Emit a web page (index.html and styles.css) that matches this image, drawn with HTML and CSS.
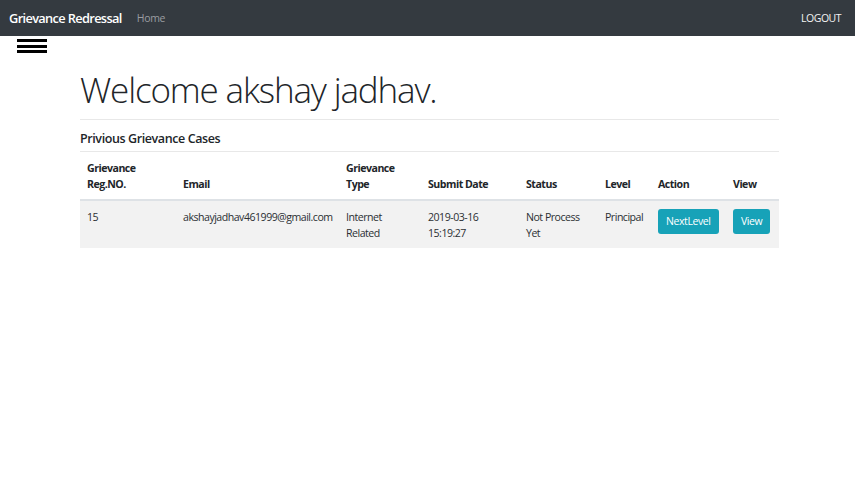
FILE: index.html
```html
<!DOCTYPE html>
<html>
<head>
<meta charset="utf-8">
<link rel="stylesheet" href="styles.css">
</head>
<body>
<nav class="navbar">
  <div class="nav-left">
    <span class="brand">Grievance Redressal</span>
    <span class="nav-link">Home</span>
  </div>
  <span class="logout">LOGOUT</span>
</nav>
<div class="hamburger"><span></span><span></span><span></span></div>
<main class="container">
  <h1 class="welcome">Welcome akshay jadhav.</h1>
  <hr class="rule">
  <h5 class="section-title">Privious Grievance Cases</h5>
  <hr class="rule rule-tight">
  <table class="cases">
    <colgroup>
      <col class="c1"><col class="c2"><col class="c3"><col class="c4"><col class="c5"><col class="c6"><col class="c7"><col class="c8">
    </colgroup>
    <thead>
      <tr>
        <th>Grievance<br>Reg.NO.</th>
        <th>Email</th>
        <th>Grievance<br>Type</th>
        <th>Submit Date</th>
        <th>Status</th>
        <th>Level</th>
        <th>Action</th>
        <th>View</th>
      </tr>
    </thead>
    <tbody>
      <tr>
        <td>15</td>
        <td>akshayjadhav461999@gmail.com</td>
        <td>Internet<br>Related</td>
        <td>2019-03-16<br>15:19:27</td>
        <td>Not Process<br>Yet</td>
        <td>Principal</td>
        <td><button class="btn">NextLevel</button></td>
        <td><button class="btn">View</button></td>
      </tr>
    </tbody>
  </table>
</main>
</body>
</html>
```
FILE: styles.css
```css
* { box-sizing: border-box; }
body {
  margin: 0;
  font-family: "Open Sans", "Noto Sans", sans-serif;
  color: #212529;
  background: #fff;
}
.navbar {
  height: 36px;
  background: #343a40;
  display: flex;
  align-items: center;
  justify-content: space-between;
  padding: 0 14px 0 9px;
}
.nav-left { display: flex; align-items: center; }
.brand {
  color: #fff;
  font-size: 12.8px;
  font-weight: 600;
  letter-spacing: -0.65px;
  margin-right: 15px;
}
.nav-link {
  color: #9a9da0;
  font-size: 10.5px;
  letter-spacing: -0.3px;
}
.logout {
  color: #f3f3f3;
  font-size: 10.5px;
  letter-spacing: -0.5px;
}
.hamburger {
  margin: 3px 0 0 17px;
  width: 30px;
  display: flex;
  flex-direction: column;
  gap: 2.5px;
}
.hamburger span {
  display: block;
  height: 3px;
  background: #000;
}
.container {
  width: 699px;
  margin-left: 80px;
}
.welcome {
  font-size: 35px;
  font-weight: 300;
  margin: 16px 0 0;
  line-height: 42px;
  letter-spacing: -1.15px;
}
.rule {
  border: 0;
  border-top: 1px solid #e8e8e8;
  margin: 8px 0 0;
}
.section-title {
  font-size: 12.5px;
  font-weight: 600;
  letter-spacing: -0.4px;
  margin: 10px 0 0;
  line-height: 18px;
}
.rule-tight { margin-top: 3px; }
.cases {
  width: 699px;
  border-collapse: collapse;
  table-layout: fixed;
  font-size: 10.6px;
  line-height: 16px;
  letter-spacing: -0.5px;
}
.c1 { width: 96px; }
.c2 { width: 163px; }
.c3 { width: 82px; }
.c4 { width: 98px; }
.c5 { width: 79px; }
.c6 { width: 53px; }
.c7 { width: 75px; }
.c8 { width: 53px; }
.cases th {
  text-align: left;
  vertical-align: bottom;
  font-weight: 700;
  padding: 8px 7px 7px;
  border-bottom: 2px solid #dee2e6;
}
.cases td {
  vertical-align: top;
  padding: 8px 7px 7px;
  background: #f2f2f2;
  color: #2b2f33;
}
.btn {
  font-family: inherit;
  font-size: 10.5px;
  letter-spacing: -0.4px;
  color: #fff;
  background: #17a2b8;
  border: 0;
  border-radius: 3px;
  height: 25px;
  padding: 0 8px;
  line-height: 25px;
}
```
